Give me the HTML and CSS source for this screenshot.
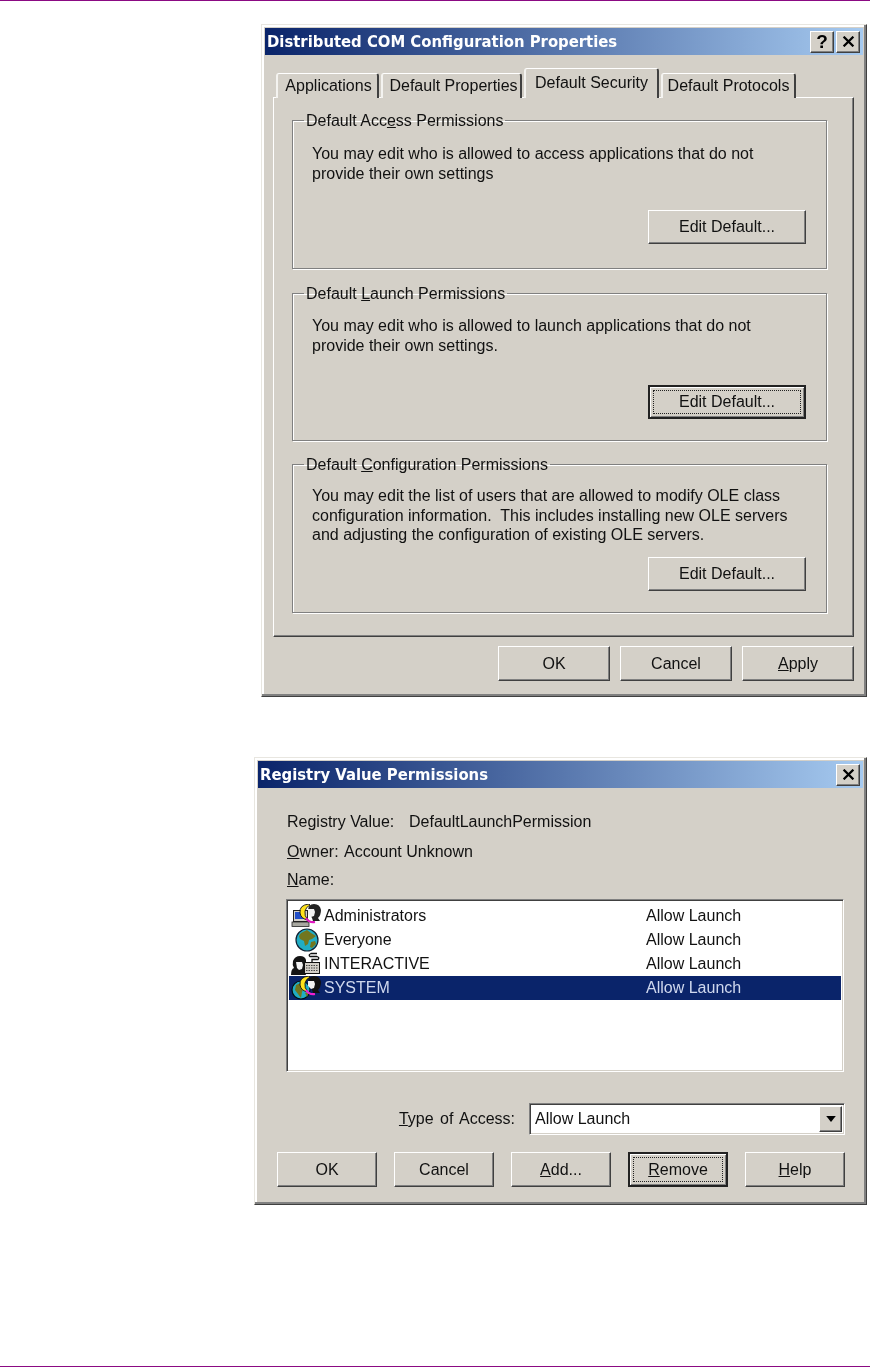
FILE: index.html
```html
<!DOCTYPE html>
<html lang="en">
<head>
<meta charset="utf-8">
<title>DCOM configuration dialogs</title>
<link rel="stylesheet" href="styles.css">
</head>
<body>
<div class="page">
  <section class="dialog dialog-props">
    <header class="titlebar">
      <span class="title">Distributed COM Configuration Properties</span>
      <span class="caption-btn help-btn">?</span>
      <span class="caption-btn close-btn"><svg viewBox="0 0 12 10" width="13" height="11"><path d="M1.5 .5 10.5 9.5M10.5 .5 1.5 9.5" stroke="#000" stroke-width="2" fill="none"/></svg></span>
    </header>
    <nav class="tabs">
      <span class="tab tab-a">Applications</span>
      <span class="tab tab-b">Default Properties</span>
      <span class="tab tab-active">Default Security</span>
      <span class="tab tab-d">Default Protocols</span>
    </nav>
    <div class="tabpanel">
      <fieldset class="group group-1">
        <legend>Default Acc<u>e</u>ss Permissions</legend>
        <p class="group-text">You may edit who is allowed to access applications that do not<br>provide their own settings</p>
        <div class="group-actions actions-1"><button class="btn edit-btn">Edit Default...</button></div>
      </fieldset>
      <fieldset class="group group-2">
        <legend>Default <u>L</u>aunch Permissions</legend>
        <p class="group-text">You may edit who is allowed to launch applications that do not<br>provide their own settings.</p>
        <div class="group-actions actions-2"><button class="btn edit-btn btn-default"><span class="focus">Edit Default...</span></button></div>
      </fieldset>
      <fieldset class="group group-3">
        <legend>Default <u>C</u>onfiguration Permissions</legend>
        <p class="group-text">You may edit the list of users that are allowed to modify OLE class<br>configuration information.&nbsp; This includes installing new OLE servers<br>and adjusting the configuration of existing OLE servers.</p>
        <div class="group-actions actions-3"><button class="btn edit-btn">Edit Default...</button></div>
      </fieldset>
    </div>
    <footer class="dialog-buttons">
      <button class="btn wide-btn">OK</button>
      <button class="btn wide-btn">Cancel</button>
      <button class="btn wide-btn"><u>A</u>pply</button>
    </footer>
  </section>

  <section class="dialog dialog-perms">
    <header class="titlebar">
      <span class="title">Registry Value Permissions</span>
      <span class="caption-btn close-btn"><svg viewBox="0 0 12 10" width="13" height="11"><path d="M1.5 .5 10.5 9.5M10.5 .5 1.5 9.5" stroke="#000" stroke-width="2" fill="none"/></svg></span>
    </header>
    <div class="perms-body">
      <div class="info-line"><span class="info-label">Registry Value:</span><span>DefaultLaunchPermission</span></div>
      <div class="info-line"><span class="owner-label"><u>O</u>wner:</span><span>Account Unknown</span></div>
      <div class="info-line name-line"><span><u>N</u>ame:</span></div>
      <ul class="listbox">
        <li class="row">
          <svg class="row-icon" viewBox="0 0 30 24" width="30" height="24">
            <rect x="2.500" y="6.500" width="14" height="11" fill="#d4d0c8" stroke="#222"/><rect x="4" y="8" width="9" height="7" fill="#2450c8"/><rect x="1" y="18" width="17" height="4.500" fill="#a8a8a0" stroke="#222" stroke-width=".8"/>
            <path d="M18 0Q8 1 9 9q1 6 8 7-4-4-3-9 1-4 5-6z" fill="#ffe21a" stroke="#111" stroke-width=".9"/>
            <path d="M15 14q3 5 9 4" fill="none" stroke="#e018c0" stroke-width="2.200"/>
            <path d="M17 7q0-7 6-7 6 0 7 6 0 5-3 8l2 3h-7l-1-3z" fill="#222"/><path d="M17 5h6l1 3-1 4-3 1-3-3z" fill="#f2f2f2"/>
          </svg>
          <span class="row-name">Administrators</span><span class="row-access">Allow Launch</span>
        </li>
        <li class="row">
          <svg class="row-icon" viewBox="0 0 30 24" width="30" height="24">
            <circle cx="16" cy="12" r="11" fill="#20adc4" stroke="#123" stroke-width="1.200"/><path d="M10 5l6-3 4 3 5 3-4 3-3 1-1 4-3 2-1-5-4-2-1-3zM20 14l4-1 1 3-4 4-2-1z" fill="#71761f"/>
          </svg>
          <span class="row-name">Everyone</span><span class="row-access">Allow Launch</span>
        </li>
        <li class="row">
          <svg class="row-icon" viewBox="0 0 30 24" width="30" height="24">
            <path d="M0 23q0-6 3-7-2-3-1-7 2-5 7-5 5 0 6 4v3l-2 6 2 6z" fill="#151515"/><path d="M5 10h6l1 3-1 4-3 1-2-2z" fill="#f2f2f2"/>
            <rect x="13.500" y="10.500" width="15" height="11" fill="#d4d0c8" stroke="#111"/><path d="M15 13.500h12M15 16h12M15 18.500h12" stroke="#444" stroke-width="1.200" stroke-dasharray="1.500 1"/>
            <path d="M21 10V7.500h6Q29 5.500 26 4.500H19Q17 3 20 1.500h6" fill="none" stroke="#111" stroke-width="1.300"/>
          </svg>
          <span class="row-name">INTERACTIVE</span><span class="row-access">Allow Launch</span>
        </li>
        <li class="row row-selected">
          <svg class="row-icon" viewBox="0 0 30 24" width="30" height="24">
            <circle cx="10" cy="14" r="9" fill="#20adc4" stroke="#011" stroke-width="1.200"/><path d="M5 9l5-2 3 4-2 5-1 6-3-4-3-4zM14 17l4-1-2 5z" fill="#71761f"/>
            <path d="M18 0Q8 1 9 9q1 6 8 7-4-4-3-9 1-4 5-6z" fill="#ffe21a" stroke="#111" stroke-width=".9"/>
            <path d="M15 14q3 5 9 4" fill="none" stroke="#f020d0" stroke-width="2.200"/>
            <path d="M17 7q0-7 6-7 6 0 7 6 0 5-3 8l2 3h-7l-1-3z" fill="#111"/><path d="M17 5h6l1 3-1 4-3 1-3-3z" fill="#f2f2f2"/>
          </svg>
          <span class="row-name">SYSTEM</span><span class="row-access">Allow Launch</span>
        </li>
      </ul>
      <div class="access-line">
        <span class="access-label"><u>T</u>ype of Access:</span>
        <div class="combo"><span class="combo-value">Allow Launch</span><span class="combo-arrow"><svg viewBox="0 0 8 5" width="10" height="6"><path d="M0 0h8L4 5z" fill="#000"/></svg></span></div>
      </div>
      <div class="perm-buttons">
        <button class="btn perm-btn">OK</button>
        <button class="btn perm-btn">Cancel</button>
        <button class="btn perm-btn"><u>A</u>dd...</button>
        <button class="btn perm-btn btn-default"><span class="focus"><u>R</u>emove</span></button>
        <button class="btn perm-btn"><u>H</u>elp</button>
      </div>
    </div>
  </section>
</div>
</body>
</html>
```
FILE: styles.css
```css
* { box-sizing: border-box; }
html, body { margin: 0; background: #fff; }
body {
  font-family: "Liberation Sans", Arial, sans-serif;
  font-size: 16px;
  color: #111;
}
.page {
  height: 1367px;
  border-top: 1px solid #8b0a83;
  border-bottom: 1px solid #8b0a83;
  padding-top: 23px;
  display: flex;
  flex-direction: column;
  align-items: flex-end;
  padding-right: 3px;
}
.dialog {
  background: #d4d0c8;
  border: 1px solid;
  border-color: #e8e6e0 #404040 #404040 #e8e6e0;
  box-shadow: inset -2px -2px 0 #808080, inset 2px 2px 0 #fff;
  padding: 3px;
  filter: blur(.35px);
}
.dialog-props { width: 606px; height: 673px; }
.dialog-perms { width: 613px; height: 448px; margin-top: 60px; }

.titlebar {
  height: 27px;
  background: linear-gradient(90deg, #0a246a, #a6caf0);
  display: flex;
  align-items: center;
  padding: 0 3px 0 2px;
  gap: 2px;
}
.title {
  flex: 1;
  color: #fff;
  font-family: "DejaVu Sans Condensed", "DejaVu Sans", sans-serif;
  font-weight: 700;
  font-size: 16.5px;
  white-space: nowrap;
}
.caption-btn {
  width: 24px;
  height: 22px;
  background: #d4d0c8;
  border: 1px solid;
  border-color: #fff #404040 #404040 #fff;
  box-shadow: inset -1px -1px 0 #808080;
  display: flex;
  align-items: center;
  justify-content: center;
  color: #000;
  font-weight: 700;
  font-size: 19px;
}
.tabs {
  display: flex;
  align-items: flex-end;
  height: 42px;
  padding-left: 11px;
  gap: 2px;
  position: relative;
  z-index: 1;
}
.tab {
  height: 25px;
  background: #d4d0c8;
  border-top: 1px solid #fff;
  border-left: 2px solid #f4f3f0;
  border-right: 2px solid #404040;
  border-radius: 3px 3px 0 0;
  display: flex;
  align-items: center;
  justify-content: center;
  white-space: nowrap;
  margin-bottom: -1px;
}
.tab-a { width: 103px; padding-left: 2px; }
.tab-b { width: 141px; padding-left: 4px; }
.tab-active {
  width: 135px;
  height: 30px;
  padding-bottom: 2px;
  position: relative;
  z-index: 2;
  margin-bottom: -1px;
}
.tab-d { width: 135px; }
.tabpanel {
  width: 581px;
  height: 540px;
  margin-left: 8px;
  border: 1px solid;
  border-color: #fff #404040 #404040 #fff;
  box-shadow: inset -1px -1px 0 #808080;
  padding: 12px 26px 0 18px;
}
.group {
  margin: 0;
  padding: 0;
  border: 1px solid #808080;
  box-shadow: 1px 1px 0 #fff, inset 1px 1px 0 #fff;
  min-width: 0;
}
.group legend {
  padding: 2px 2px 0;
  margin-left: 11px;
  line-height: 18px;
  white-space: nowrap;
}
.group-1 { height: 159px; }
.group-2 { height: 158px; margin-top: 14px; }
.group-3 { height: 159px; margin-top: 13px; }
.group-text {
  margin: 0;
  padding-left: 19px;
  line-height: 19.5px;
  white-space: nowrap;
}
.group-1 .group-text { padding-top: 14px; }
.group-2 .group-text { padding-top: 13px; }
.group-3 .group-text { padding-top: 12px; }
.group-actions { display: flex; justify-content: flex-end; padding-right: 20px; }
.actions-1 { margin-top: 27px; }
.actions-2 { margin-top: 30px; }
.actions-3 { margin-top: 12.5px; }
.btn {
  font: inherit;
  color: inherit;
  background: #d4d0c8;
  border: 1px solid;
  border-color: #fff #404040 #404040 #fff;
  box-shadow: inset -1px -1px 0 #808080;
  padding: 0;
  display: flex;
  align-items: center;
  justify-content: center;
}
.edit-btn { width: 158px; height: 34px; }
.wide-btn { width: 112px; height: 35px; }
.btn-default {
  border: 2px solid #222;
  box-shadow: inset 1px 1px 0 #fff, inset -1px -1px 0 #808080;
}
.focus {
  display: flex;
  align-items: center;
  justify-content: center;
  width: calc(100% - 6px);
  height: calc(100% - 6px);
  border: 1px dotted #222;
}
.dialog-buttons {
  display: flex;
  justify-content: flex-end;
  gap: 10px;
  padding: 9px 9px 0 0;
}
.perms-body { padding: 19px 18px 0 19px; }
.info-line {
  display: flex;
  height: 30px;
  align-items: center;
  padding-left: 10px;
  white-space: nowrap;
}
.name-line { height: 26px; }
.info-label { width: 122px; }
.owner-label { width: 57px; }
.listbox {
  list-style: none;
  margin: 6px 0 0 9px;
  padding: 4px 2px 2px;
  width: 558px;
  height: 173px;
  background: #fff;
  border: 1px solid;
  border-color: #808080 #fff #fff #808080;
  box-shadow: inset 1px 1px 0 #404040, inset -1px -1px 0 #d4d0c8;
}
.row {
  display: flex;
  align-items: center;
  height: 24px;
  padding-left: 2px;
  white-space: nowrap;
}
.row-icon { flex: none; }
.row-name { width: 322px; margin-left: 3px; }
.row-selected { background: #0a246a; color: #cfd8ee; }
.access-line {
  display: flex;
  justify-content: flex-end;
  align-items: center;
  margin-top: 31px;
}
.access-label { margin-right: 14px; word-spacing: 2px; }
.combo {
  width: 316px;
  height: 32px;
  background: #fff;
  border: 1px solid;
  border-color: #808080 #fff #fff #808080;
  box-shadow: inset 1px 1px 0 #404040, inset -1px -1px 0 #d4d0c8;
  display: flex;
  align-items: center;
  padding: 2px;
}
.combo-value { flex: 1; padding-left: 3px; }
.combo-arrow {
  width: 23px;
  height: 26px;
  background: #d4d0c8;
  border: 1px solid;
  border-color: #fff #404040 #404040 #fff;
  box-shadow: inset -1px -1px 0 #808080;
  display: flex;
  align-items: center;
  justify-content: center;
}
.perm-buttons {
  display: flex;
  justify-content: space-between;
  margin-top: 17px;
}
.perm-btn { width: 100px; height: 35px; }
```
